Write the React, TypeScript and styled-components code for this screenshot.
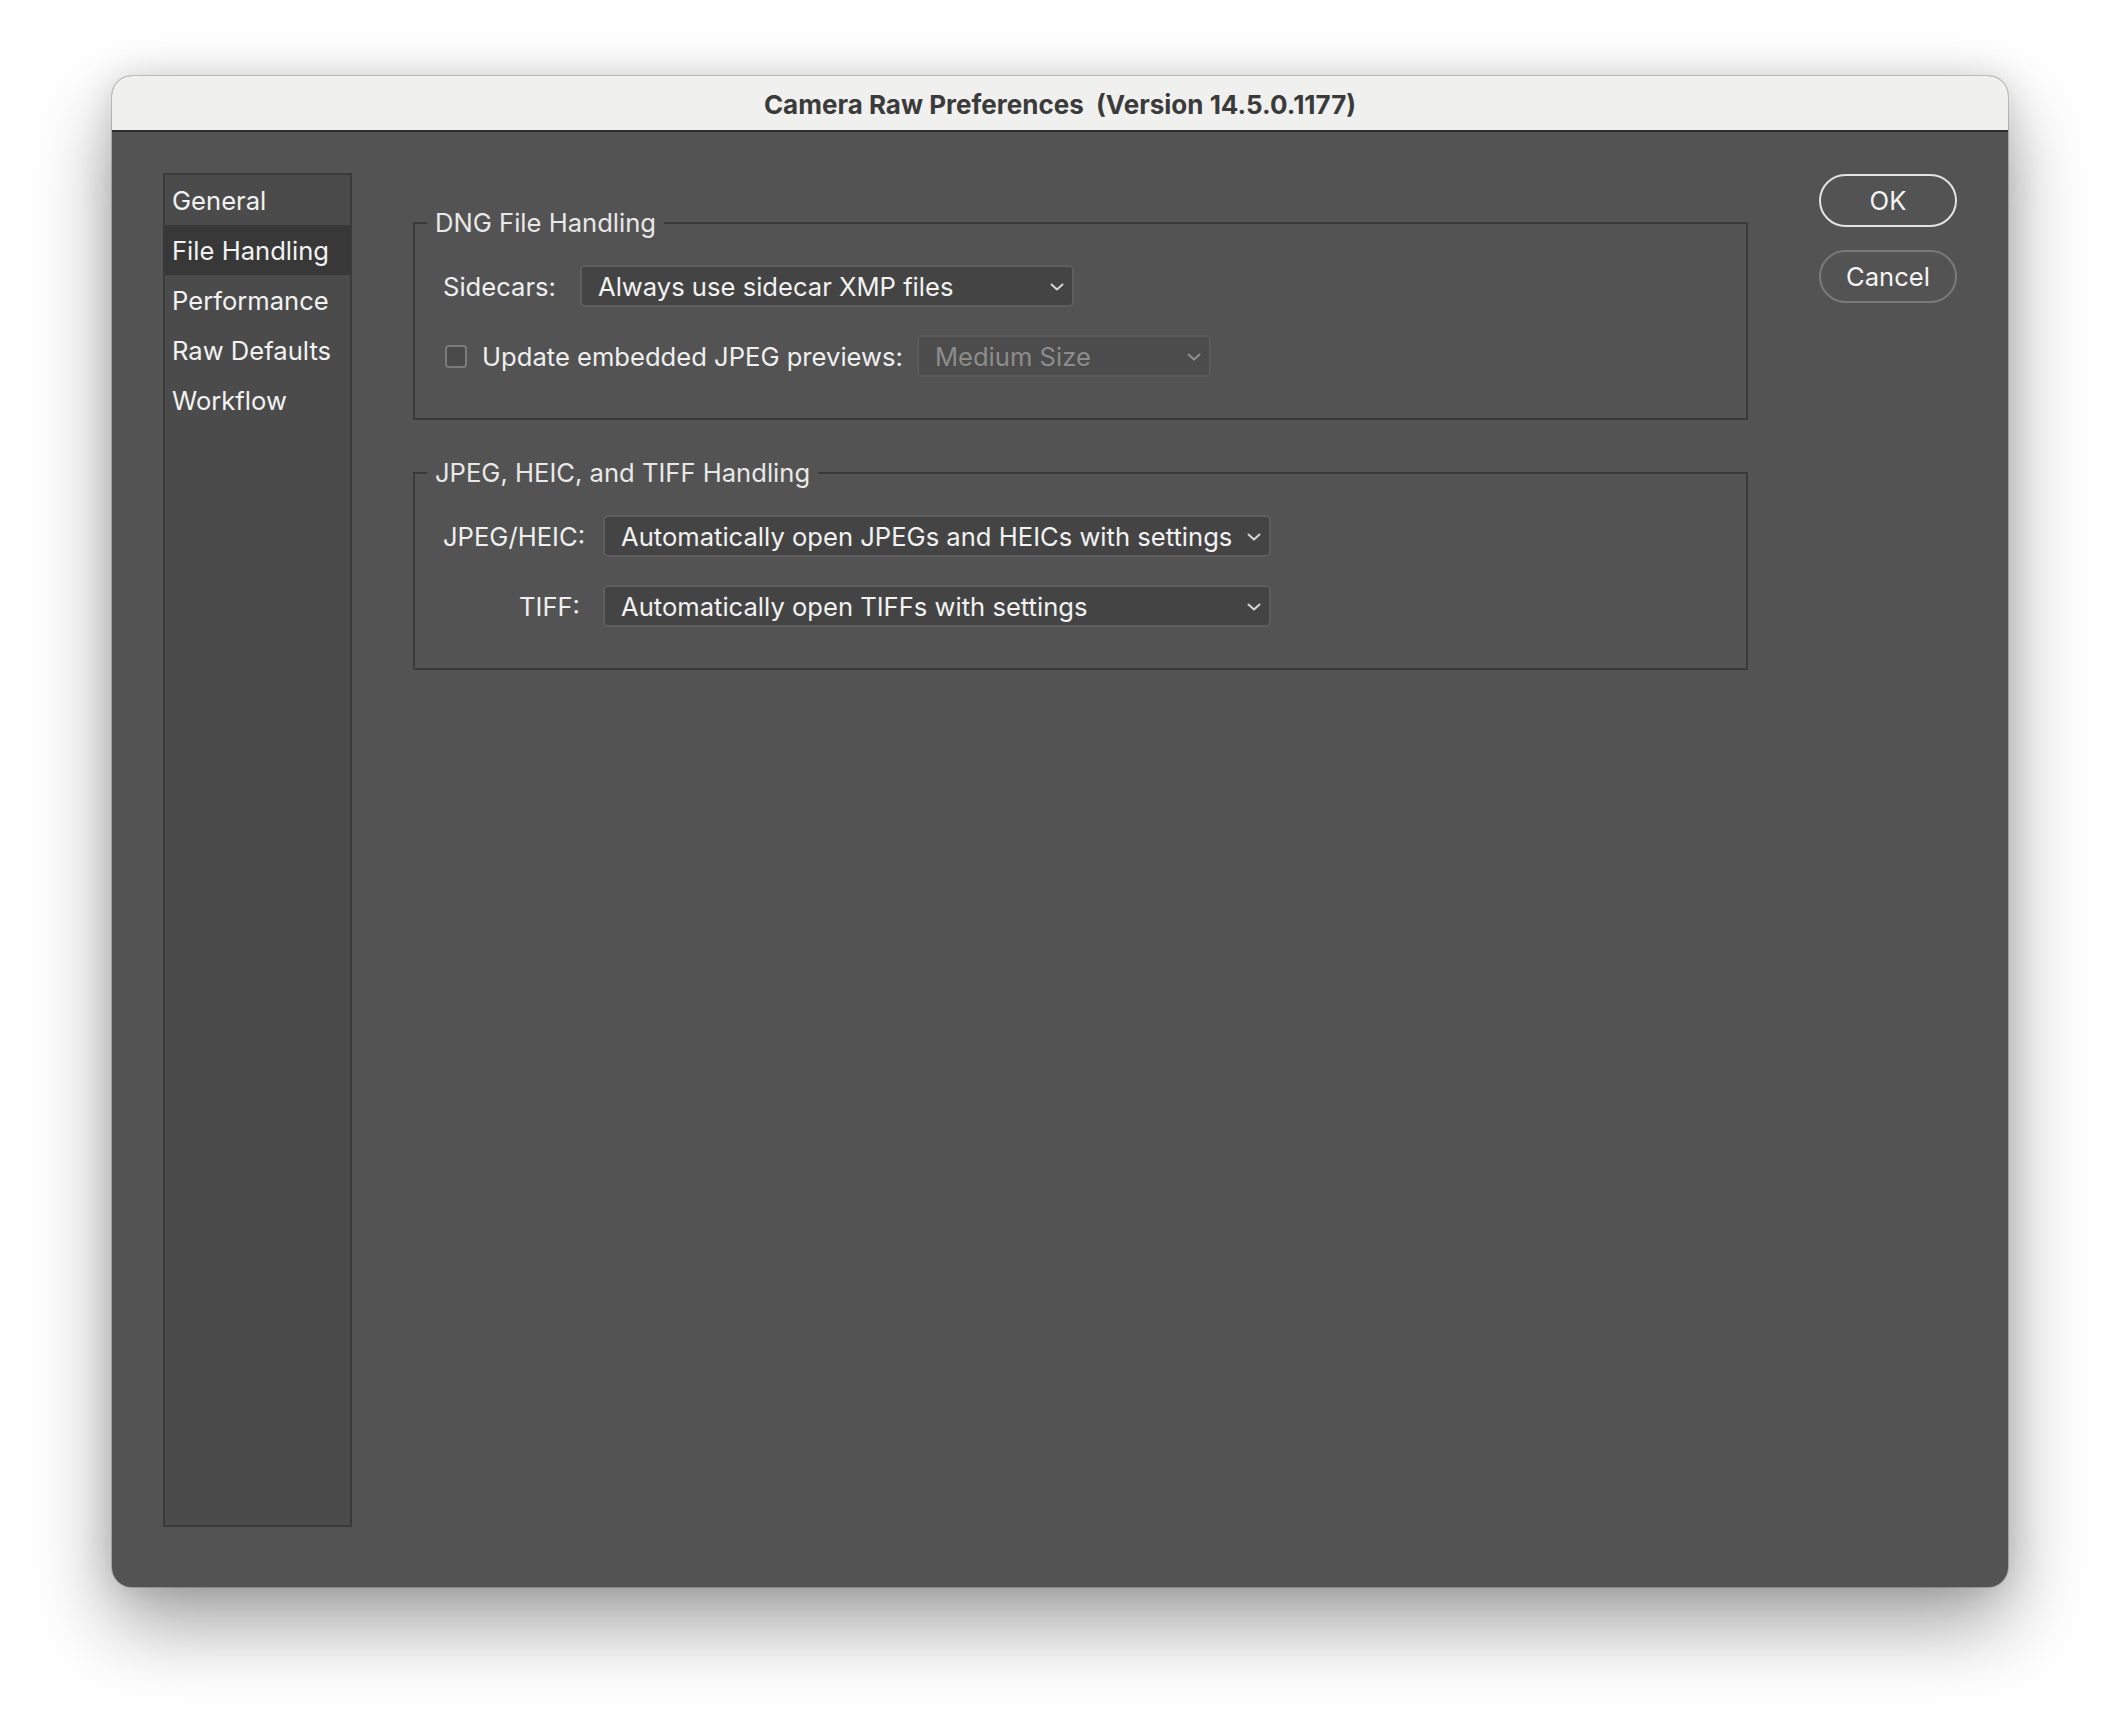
import React from 'react';
import styled, {createGlobalStyle} from 'styled-components';

const GlobalStyle = createGlobalStyle`
    html, body {
        margin: 0;
        padding: 0;
        background: #ffffff;
    }
    body {
        font-family: 'Inter', 'Noto Sans', sans-serif;
        -webkit-font-smoothing: antialiased;
    }
    * {
        box-sizing: border-box;
    }
`

const FONT = '25.6px';

const Chevron = ({disabled}: {disabled?: boolean}) => (
    <ChevronSvg width="14" height="8" viewBox="0 0 14 8">
        <polyline points="1.5,1.5 7,6.5 12.5,1.5" fill="none"
                  stroke={disabled ? '#8f8f8f' : '#d6d6d6'} strokeWidth="2"
                  strokeLinecap="round" strokeLinejoin="round"/>
    </ChevronSvg>
);

const Select = ({value, width, disabled}: { value: string, width: number, disabled?: boolean }) => (
    <SelectBox $width={width} $disabled={disabled}>
        <SelectValue>{value}</SelectValue>
        <Chevron disabled={disabled}/>
    </SelectBox>
);

const sections = ['General', 'File Handling', 'Performance', 'Raw Defaults', 'Workflow'];

export default function App() {
    return (
        <Page>
            <GlobalStyle/>
            <Window>
                <TitleBar>Camera Raw Preferences  (Version 14.5.0.1177)</TitleBar>
                <Body>
                    <Sidebar>
                        {sections.map(s => (
                            <SidebarItem key={s} $active={s === 'File Handling'}>{s}</SidebarItem>
                        ))}
                    </Sidebar>
                    <Main>
                        <Group>
                            <Legend>DNG File Handling</Legend>
                            <GroupContent>
                                <Row>
                                    <Label>Sidecars:</Label>
                                    <Spacer $w={24}/>
                                    <Select value="Always use sidecar XMP files" width={494}/>
                                </Row>
                                <Row>
                                    <Checkbox/>
                                    <Spacer $w={15}/>
                                    <Label>Update embedded JPEG previews:</Label>
                                    <Spacer $w={14}/>
                                    <Select value="Medium Size" width={294} disabled/>
                                </Row>
                            </GroupContent>
                        </Group>
                        <Group>
                            <Legend>JPEG, HEIC, and TIFF Handling</Legend>
                            <GroupContent>
                                <Row>
                                    <Label $width={137}>JPEG/HEIC:</Label>
                                    <Spacer $w={23}/>
                                    <Select value="Automatically open JPEGs and HEICs with settings" width={668}/>
                                </Row>
                                <Row>
                                    <Label $width={137}>TIFF:</Label>
                                    <Spacer $w={23}/>
                                    <Select value="Automatically open TIFFs with settings" width={668}/>
                                </Row>
                            </GroupContent>
                        </Group>
                    </Main>
                    <Buttons>
                        <PillButton $primary>OK</PillButton>
                        <PillButton>Cancel</PillButton>
                    </Buttons>
                </Body>
            </Window>
        </Page>
    );
}

const Page = styled.div`
    width: 2120px;
    height: 1736px;
    padding: 76px 0 0 112px;
`
const Window = styled.div`
    width: 1896px;
    height: 1511px;
    border-radius: 20px;
    overflow: hidden;
    background: #535353;
    display: flex;
    flex-direction: column;
    box-shadow: 0 36px 80px rgba(0, 0, 0, 0.38), 0 0 34px rgba(0, 0, 0, 0.12), 0 0 0 1px rgba(0, 0, 0, 0.18);
`
const TitleBar = styled.div`
    height: 56px;
    flex-shrink: 0;
    background: #f0f0ef;
    border-bottom: 2px solid #2c2c2c;
    display: flex;
    align-items: center;
    justify-content: center;
    white-space: pre;
    font-size: 26px;
    font-weight: 700;
    color: #3b3b3b;
    padding-top: 2px;
`
const Body = styled.div`
    flex: 1;
    display: flex;
    padding: 41px 51px 60px 51px;
`
const Sidebar = styled.div`
    width: 189px;
    flex-shrink: 0;
    background: #4b4b4b;
    border: 2px solid #3a3a3a;
    display: flex;
    flex-direction: column;
`
const SidebarItem = styled.div<{ $active?: boolean }>`
    height: 50px;
    display: flex;
    align-items: center;
    padding-left: 7px;
    font-size: ${FONT};
    color: #f2f2f2;
    white-space: nowrap;
    background: ${p => p.$active ? '#383838' : 'transparent'};
`
const Main = styled.div`
    width: 1335px;
    margin-left: 61px;
    padding-top: 35px;
    display: flex;
    flex-direction: column;
    gap: 38px;
`
const Group = styled.fieldset`
    margin: 0;
    padding: 0;
    min-width: 0;
    border: 2px solid #3a3a3a;
`
const Legend = styled.legend`
    margin-left: 12px;
    padding: 0 8px;
    font-size: ${FONT};
    line-height: 30px;
    color: #e8e8e8;
`
const GroupContent = styled.div`
    display: flex;
    flex-direction: column;
    gap: 28px;
    padding: 27px 28px 41px 28px;
`
const Row = styled.div`
    display: flex;
    align-items: center;
    height: 42px;
`
const Label = styled.div<{ $width?: number }>`
    font-size: ${FONT};
    color: #efefef;
    white-space: nowrap;
    ${p => p.$width ? `width: ${p.$width}px; text-align: right;` : ''}
`
const Spacer = styled.div<{ $w: number }>`
    width: ${p => p.$w}px;
    flex-shrink: 0;
`
const SelectBox = styled.div<{ $width: number, $disabled?: boolean }>`
    width: ${p => p.$width}px;
    height: 42px;
    display: flex;
    align-items: center;
    justify-content: space-between;
    padding: 0 8px 0 16px;
    border: 2px solid ${p => p.$disabled ? '#5a5a5a' : '#5e5e5e'};
    border-radius: 5px;
    background: ${p => p.$disabled ? '#4c4c4c' : '#444444'};
    color: ${p => p.$disabled ? '#8c8c8c' : '#f2f2f2'};
    font-size: ${FONT};
`
const SelectValue = styled.span`
    white-space: nowrap;
`
const ChevronSvg = styled.svg`
    flex-shrink: 0;
    margin-top: 2px;
`
const Checkbox = styled.div`
    width: 22px;
    height: 23px;
    margin-left: 2px;
    border: 2px solid #7b7b7b;
    border-radius: 4px;
    background: #4a4a4a;
    flex-shrink: 0;
`
const Buttons = styled.div`
    margin-left: 71px;
    padding-top: 1px;
    display: flex;
    flex-direction: column;
    gap: 23px;
`
const PillButton = styled.button<{ $primary?: boolean }>`
    width: 138px;
    height: 53px;
    border-radius: 27px;
    border: 2px solid ${p => p.$primary ? '#e4e4e4' : '#7a7a7a'};
    background: transparent;
    color: #f4f4f4;
    font-family: 'Inter', 'Noto Sans', sans-serif;
    font-size: ${FONT};
    padding: 0;
`
